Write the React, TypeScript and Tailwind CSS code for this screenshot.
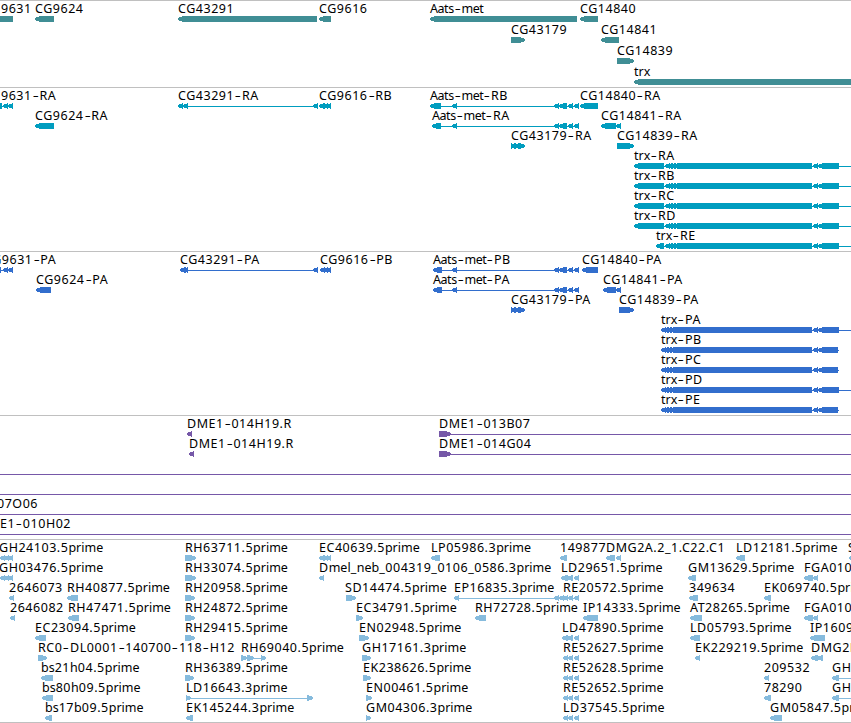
type Span = [number, number];

interface Feature {
  label?: string;
  x: number;
  dir?: 'left' | 'right';
  blocks?: Span[];
  line?: Span;
}

interface TrackData {
  id: string;
  color: string;
  rowClass: string;
  padClass: string;
  rows: Feature[][];
}

const VIEW_WIDTH = 851;
const HEAD = 5;

const left = (label: string, x: number, blocks: Span[], line?: Span): Feature => ({ label, x, dir: 'left', blocks, line });
const right = (label: string, x: number, blocks: Span[], line?: Span): Feature => ({ label, x, dir: 'right', blocks, line });

const metExons: Span[] = [[554, 559], [559, 567], [568, 573], [574, 579]];
const trxExons: Span[] = [[665, 670], [667, 673], [670, 676], [673, 812], [813, 818], [818, 839]];
const trxCoding: Span[] = [[661, 666], [663, 669], [666, 672], [669, 676], [672, 812], [813, 818]];
const tripleExons: Span[] = [[563, 568], [568, 573], [574, 579]];

const tracks: TrackData[] = [
  {
    id: 'genes',
    color: '#408e95',
    rowClass: 'h-[21px]',
    padClass: 'pb-0.5',
    rows: [
      [
        left('9631', 1, [[-10, 13]]),
        left('CG9624', 35, [[35, 54]]),
        left('CG43291', 178, [[178, 317]]),
        left('CG9616', 319, [[319, 331]]),
        left('Aats-met', 430, [[430, 577]]),
        left('CG14840', 580, [[580, 598]]),
      ],
      [right('CG43179', 511, [[511, 525]]), left('CG14841', 601, [[601, 619]])],
      [right('CG14839', 617, [[617, 634]])],
      [left('trx', 634, [[634, 870]])],
    ],
  },
  {
    id: 'transcripts',
    color: '#009dbf',
    rowClass: 'h-5',
    padClass: 'pb-[3px]',
    rows: [
      [
        left('9631-RA', 1, [[-6, 2], [3, 8], [8, 13]], [0, 13]),
        left('CG43291-RA', 178, [[178, 183], [183, 188], [313, 318]], [178, 318]),
        left('CG9616-RB', 319, [[319, 325], [323, 328], [326, 331]]),
        left('Aats-met-RB', 430, [[430, 441], [452, 457], ...metExons], [430, 579]),
        left('CG14840-RA', 580, [[580, 598]]),
      ],
      [
        left('CG9624-RA', 35, [[35, 54]]),
        left('Aats-met-RA', 432, [[432, 441], [452, 457], ...metExons], [432, 579]),
        left('CG14841-RA', 601, [[601, 616], [616, 621]]),
      ],
      [
        right('CG43179-RA', 511, [[511, 516], [514, 520], [518, 525]]),
        right('CG14839-RA', 617, [[617, 634]]),
      ],
      [left('trx-RA', 634, [[634, 664], ...trxExons], [634, VIEW_WIDTH])],
      [left('trx-RB', 634, [[634, 664], ...trxExons], [634, VIEW_WIDTH])],
      [left('trx-RC', 634, [[634, 664], ...trxExons], [634, VIEW_WIDTH])],
      [left('trx-RD', 634, [[634, 664], ...trxExons], [634, VIEW_WIDTH])],
      [left('trx-RE', 656, [[656, 664], ...trxExons], [656, VIEW_WIDTH])],
    ],
  },
  {
    id: 'proteins',
    color: '#326ecd',
    rowClass: 'h-5',
    padClass: 'pb-[3px]',
    rows: [
      [
        left('CG9631-PA', -16, [[-6, 1], [3, 8], [8, 13]], [0, 13]),
        left('CG43291-PA', 180, [[180, 186], [183, 188], [313, 318]], [180, 318]),
        left('CG9616-PB', 320, [[320, 325], [323, 328], [326, 331]]),
        left('Aats-met-PB', 433, [[433, 442], [452, 457], ...metExons], [433, 579]),
        left('CG14840-PA', 582, [[582, 598]]),
      ],
      [
        left('CG9624-PA', 36, [[36, 51]]),
        left('Aats-met-PA', 433, [[433, 442], [452, 457], ...metExons], [433, 579]),
        left('CG14841-PA', 603, [[603, 616], [616, 621]]),
      ],
      [
        right('CG43179-PA', 511, [[511, 516], [514, 520], [518, 525]]),
        right('CG14839-PA', 619, [[619, 634]]),
      ],
      [left('trx-PA', 661, [...trxCoding, [818, 839]], [661, VIEW_WIDTH])],
      [left('trx-PB', 661, [...trxCoding, [818, 838]], [661, 839])],
      [left('trx-PC', 661, [...trxCoding, [818, 838]], [661, 839])],
      [left('trx-PD', 661, [...trxCoding, [818, 839]], [661, VIEW_WIDTH])],
      [left('trx-PE', 661, [...trxCoding, [818, 838]], [661, 839])],
    ],
  },
  {
    id: 'bacs',
    color: '#7658a8',
    rowClass: 'h-5',
    padClass: 'pb-[3px]',
    rows: [
      [left('DME1-014H19.R', 187, [[187, 192]]), right('DME1-013B07', 439, [[439, 451]], [439, VIEW_WIDTH])],
      [left('DME1-014H19.R', 189, [[189, 194]]), right('DME1-014G04', 439, [[439, 451]], [439, VIEW_WIDTH])],
      [{ x: 0, line: [0, VIEW_WIDTH] }],
      [{ x: 0, line: [0, VIEW_WIDTH] }],
      [{ label: '07O06', x: -3, line: [0, VIEW_WIDTH] }],
      [{ label: 'E1-010H02', x: 0, line: [0, VIEW_WIDTH] }],
    ],
  },
  {
    id: 'ests',
    color: '#86bbdd',
    rowClass: 'h-5',
    padClass: 'pb-0.5',
    rows: [
      [
        left('GH24103.5prime', -1, [[0, 5], [4, 9], [8, 13]]),
        right('RH63711.5prime', 185, [[185, 196]]),
        left('EC40639.5prime', 319, [[319, 325], [323, 328], [326, 331]]),
        left('LP05986.3prime', 431, [[431, 440]]),
        left('149877', 560, [[560, 567]]),
        left('DMG2A.2_1.C22.C1', 606, [[606, 615], [616, 621]]),
        left('LD12181.5prime', 736, [[736, 745]]),
        left('SD', 848, [[849, 858]]),
      ],
      [
        left('GH03476.5prime', -1, [[0, 5], [4, 9], [8, 13]]),
        right('RH33074.5prime', 185, [[185, 196]]),
        left('Dmel_neb_004319_0106_0586.3prime', 319, [[319, 324]]),
        left('LD29651.5prime', 561, [[561, 568], [567, 573], [574, 579]]),
        left('GM13629.5prime', 688, [[688, 696]]),
        left('FGA010', 804, [[804, 813], [813, 818]]),
      ],
      [
        left('2646073', 9, [[9, 14]]),
        left('RH40877.5prime', 67, [[67, 78]]),
        right('RH20958.5prime', 185, [[185, 195]]),
        right('SD14474.5prime', 345, [[346, 356]]),
        left('EP16835.3prime', 454, [[454, 459], [554, 559]], [454, 560]),
        left('RE20572.5prime', 563, [[559, 564], ...tripleExons], [559, 579]),
        left('349634', 689, [[689, 698]]),
        left('EK069740.5prime', 764, [[764, 771]]),
      ],
      [
        left('2646082', 10, [[10, 15]]),
        left('RH47471.5prime', 68, [[68, 79]]),
        right('RH24872.5prime', 185, [[185, 195]]),
        right('EC34791.5prime', 356, [[356, 363]]),
        left('RH72728.5prime', 475, [[475, 486]]),
        left('IP14333.5prime', 583, [[583, 598]]),
        left('AT28265.5prime', 690, [[690, 702]]),
        left('FGA010', 804, [[804, 813], [813, 818]]),
      ],
      [
        left('EC23094.5prime', 35, [[35, 46]]),
        right('RH29415.5prime', 185, [[185, 195]]),
        right('EN02948.5prime', 359, [[359, 369]]),
        left('LD47890.5prime', 562, [[562, 568], [567, 573], [574, 579]]),
        left('LD05793.5prime', 690, [[690, 700]]),
        left('IP1609', 810, [[810, 825]]),
      ],
      [
        right('RC0-DL0001-140700-118-H12', 38, [[38, 47]]),
        right('RH69040.5prime', 241, [[241, 247], [247, 254], [261, 266]], [241, 266]),
        right('GH17161.3prime', 362, [[362, 371]]),
        left('RE52627.5prime', 563, tripleExons),
        left('EK229219.5prime', 695, [[695, 700]]),
        left('DMG2B', 811, [[811, 818], [817, 823]]),
      ],
      [
        left('bs21h04.5prime', 41, [[41, 53]]),
        right('RH36389.5prime', 185, [[185, 194]]),
        right('EK238626.5prime', 363, [[363, 371]]),
        left('RE52628.5prime', 563, tripleExons),
        left('209532', 764, [[764, 769]]),
        left('GH', 832, [[832, 839]], [832, VIEW_WIDTH]),
      ],
      [
        left('bs80h09.5prime', 42, [[42, 53]]),
        right('LD16643.3prime', 186, [[186, 191], [307, 313]], [186, 313]),
        right('EN00461.5prime', 366, [[366, 372]]),
        left('RE52652.5prime', 563, tripleExons),
        left('78290', 764, [[764, 771]]),
        left('GH', 832, [[832, 839]], [832, VIEW_WIDTH]),
      ],
      [
        left('bs17b09.5prime', 45, [[45, 52]]),
        left('EK145244.3prime', 186, [[186, 193]]),
        right('GM04306.3prime', 366, [[366, 371]]),
        left('LD37545.5prime', 563, tripleExons),
        left('GM05847.5prime', 770, [[770, 782]]),
      ],
    ],
  },
];

// Exon box, 6px tall, with its pointed end on the strand side.
function exonPoints([start, end]: Span, dir: Feature['dir']) {
  const head = Math.min(HEAD, end - start);
  if (dir === 'right') {
    return `${start},0 ${end - head},0 ${end},2 ${end},4 ${end - head},6 ${start},6`;
  }
  return `${start},2 ${start + head},0 ${end},0 ${end},6 ${start + head},6 ${start},4`;
}

function Label({ text, x }: { text: string; x: number }) {
  const runs = text.match(/-|Aats|met|[a-z]+|[^a-z-]+/g) ?? [];
  return (
    <span className="absolute top-0 whitespace-pre leading-4" style={{ left: x }}>
      {runs.map((run, i) => {
        if (run === '-') return <span key={i} className="inline-block w-[7.7px] scale-x-150 text-center">-</span>;
        if (run === 'Aats' || run === 'met') return <span key={i} className="tracking-[-0.45px]">{run}</span>;
        if (/[a-z]/.test(run)) return <span key={i}>{run}</span>;
        return <span key={i} className="tracking-[0.53px]">{run}</span>;
      })}
    </span>
  );
}

function Row({ features, color, rowClass }: { features: Feature[]; color: string; rowClass: string }) {
  return (
    <div className={`relative ${rowClass}`}>
      {features.map((f, i) => f.label && <Label key={i} text={f.label} x={f.x} />)}
      <svg className="absolute left-0 top-[15px]" width={VIEW_WIDTH} height={6} fill={color} shapeRendering="crispEdges">
        {features.map((f, i) => (
          <g key={i}>
            {f.line && <rect x={f.line[0]} y={3} width={f.line[1] - f.line[0]} height={1} />}
            {f.blocks?.map((b, j) => <polygon key={j} points={exonPoints(b, f.dir)} />)}
          </g>
        ))}
      </svg>
    </div>
  );
}

function Track({ track }: { track: TrackData }) {
  return (
    <section className={`border-t border-[#c0c0c0] ${track.padClass}`}>
      {track.rows.map((features, i) => (
        <Row key={i} features={features} color={track.color} rowClass={track.rowClass} />
      ))}
    </section>
  );
}

export default function App() {
  return (
    <main className="h-[723px] w-[851px] overflow-hidden border-b border-[#c0c0c0] bg-white font-['Noto_Sans','DejaVu_Sans',sans-serif] text-[12.5px] text-black">
      {tracks.map((track) => (
        <Track key={track.id} track={track} />
      ))}
    </main>
  );
}
